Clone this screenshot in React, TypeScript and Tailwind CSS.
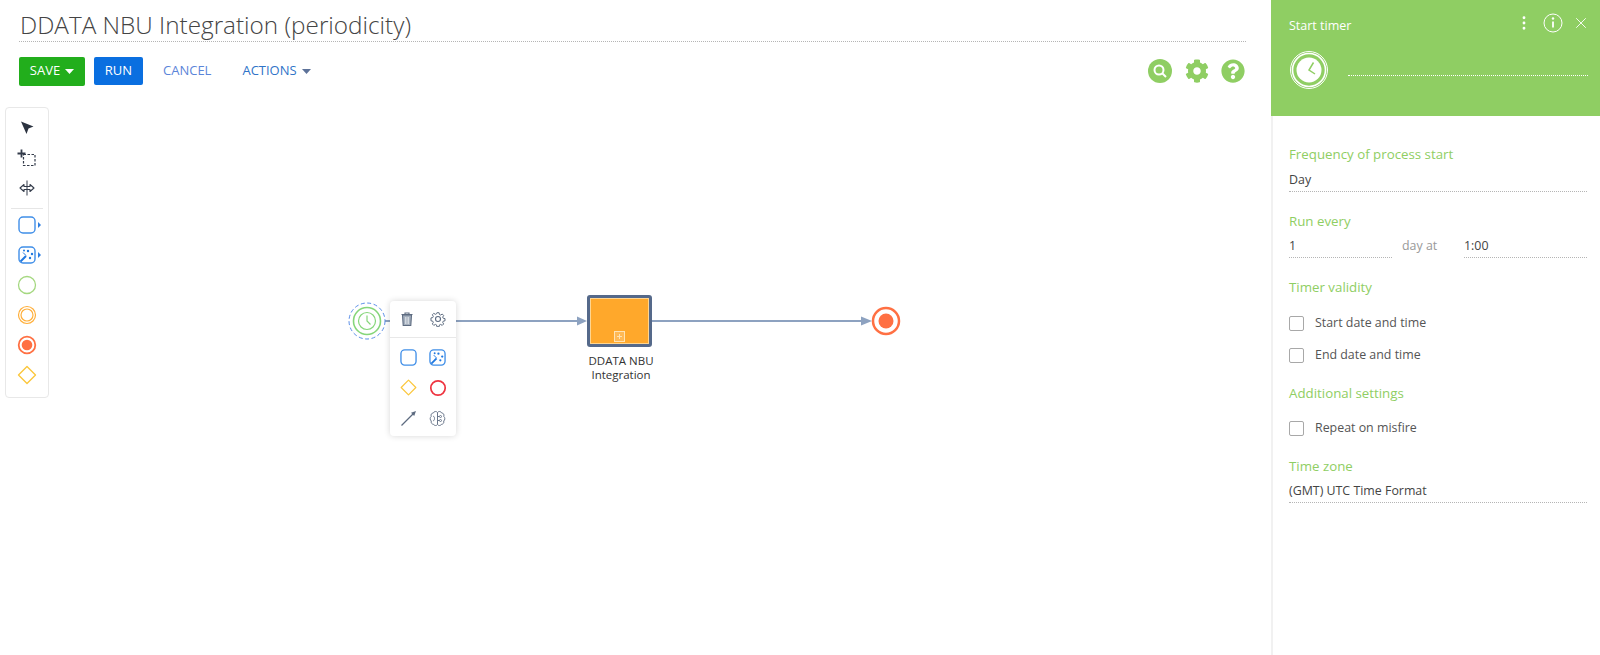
import React from "react";
import { X, EllipsisVertical } from "lucide-react";
import { FaCog, FaQuestionCircle } from "react-icons/fa";

const Caret = ({ color }: { color: string }) => (
  <svg width="9" height="5" viewBox="0 0 9 5" className="ml-[5px]"><path d="M0 0h9L4.500 5z" fill={color} /></svg>
);

const RoundedTask = ({ size = 18 }: { size?: number }) => (
  <svg width={size} height={size} viewBox="0 0 18 18" fill="none"><rect x="1" y="1" width="16" height="16" rx="4" stroke="#3f8ee8" strokeWidth="1.400" /></svg>
);

const ScriptTask = ({ size = 18 }: { size?: number }) => (
  <svg width={size} height={size} viewBox="0 0 18 18" fill="none">
    <rect x="1" y="1" width="16" height="16" rx="4" stroke="#3f8ee8" strokeWidth="1.400" />
    <path d="M2.500 15.500 8 10" stroke="#1f78e0" strokeWidth="2" />
    <path d="M5 6.500l3 3" stroke="#1f78e0" strokeWidth="1" />
    <circle cx="6" cy="4.500" r="1" fill="#1f78e0" />
    <circle cx="10" cy="5" r="1.200" fill="#1f78e0" />
    <circle cx="14" cy="8" r="1.200" fill="#1f78e0" />
    <circle cx="12" cy="12" r="1.200" fill="#1f78e0" />
  </svg>
);

const Diamond = ({ size = 22 }: { size?: number }) => (
  <svg width={size} height={size} viewBox="0 0 22 22" fill="none"><path d="M11 2.500 19.500 11 11 19.500 2.500 11z" stroke="#fbc73d" strokeWidth="1.400" strokeLinejoin="round" /></svg>
);

const ToolRow = ({ children, arrow }: { children: React.ReactNode; arrow?: boolean }) => (
  <div className="relative flex h-[30px] w-full shrink-0 items-center justify-center">
    {children}
    {arrow && <span className="absolute left-[32px] top-[12px] h-0 w-0 border-y-[3px] border-l-[3px] border-y-transparent border-l-[#2f7fe0]" />}
  </div>
);

const Toolbar = () => (
  <div className="absolute left-[5px] top-[7px] flex h-[291px] w-[44px] flex-col items-center rounded-[4px] border border-[#e8e8e8] bg-white pt-[5px]">
    <ToolRow>
      <svg width="16" height="16" viewBox="0 0 16 16"><path d="M2 1.500 14.500 6.500 9.500 8.500 7.500 14z" fill="#2c3340" /></svg>
    </ToolRow>
    <ToolRow>
      <svg width="20" height="18" viewBox="0 0 20 18" fill="none">
        <path d="M6.500 5.500h11.500v11H6.500z" stroke="#333b4a" strokeWidth="1.200" strokeDasharray="2.500 1.500" />
        <path d="M4.500 0.500v8M0.500 4.500h8" stroke="#333b4a" strokeWidth="1.800" />
      </svg>
    </ToolRow>
    <ToolRow>
      <svg width="16" height="16" viewBox="0 0 16 16" fill="none">
        <path d="M8 0.500v15" stroke="#333b4a" strokeWidth="1" />
        <path d="M5 4.500 1 8l4 3.500v-2h6v2l4-3.500-4-3.500v2H5z" stroke="#333b4a" strokeWidth="1.100" strokeLinejoin="round" />
      </svg>
    </ToolRow>
    <div className="mb-[1px] mt-[5px] h-px w-[32px] shrink-0 bg-[#e6e6e6]" />
    <ToolRow arrow><RoundedTask /></ToolRow>
    <ToolRow arrow><ScriptTask /></ToolRow>
    <ToolRow>
      <svg width="20" height="20" viewBox="0 0 20 20" fill="none"><circle cx="10" cy="10" r="8.500" stroke="#a5d880" strokeWidth="1.300" /></svg>
    </ToolRow>
    <ToolRow>
      <svg width="20" height="20" viewBox="0 0 20 20" fill="none"><circle cx="10" cy="10" r="8.500" stroke="#ffaf3a" strokeWidth="1.200" /><circle cx="10" cy="10" r="6" stroke="#ffaf3a" strokeWidth="1.200" /></svg>
    </ToolRow>
    <ToolRow>
      <svg width="20" height="20" viewBox="0 0 20 20" fill="none"><circle cx="10" cy="10" r="8.300" stroke="#ff7043" strokeWidth="1.800" /><circle cx="10" cy="10" r="5.300" fill="#ff7043" /></svg>
    </ToolRow>
    <ToolRow><Diamond /></ToolRow>
  </div>
);

const TrashIcon = () => (
  <svg width="14" height="16" viewBox="0 0 14 16" fill="none">
    <path d="M2.500 4h9l-.7 10.500H3.200z" fill="#a3aebc" stroke="#5d6b80" strokeWidth="1.100" />
    <path d="M1.500 3.500h11M5 3.500V2h4v1.500" stroke="#5d6b80" strokeWidth="1.100" />
    <path d="M5.500 6v7M7 6v7M8.500 6v7" stroke="#e6e9ee" strokeWidth="0.700" />
  </svg>
);

const GearIcon = () => (
  <svg width="16" height="16" viewBox="0 0 16 16" fill="none" stroke="#5d6b80" strokeWidth="1.100">
    <circle cx="8" cy="8" r="2.500" />
    <path d="M6.800 1h2.400l.4 2 1.300.6 1.800-1.100 1.600 1.600-1.100 1.800.6 1.300 2 .4v2.400l-2 .4-.6 1.300 1.100 1.800-1.600 1.600-1.800-1.100-1.300.6-.4 2H6.800l-.4-2-1.300-.6-1.800 1.100-1.600-1.600 1.100-1.800-.6-1.300-2-.4V6.800l2-.4.6-1.300-1.100-1.800 1.600-1.600 1.800 1.100 1.300-.6z" strokeLinejoin="round" transform="translate(0.800 0.800) scale(0.900)" />
  </svg>
);

const BrainIcon = () => (
  <svg width="17" height="17" viewBox="0 0 17 17" fill="none" stroke="#6a778b" strokeWidth="1">
    <path d="M8.500 2.500C7.500 1 5 1.200 4.500 2.800 2.500 3 1.500 4.800 2.300 6.300 0.800 7.500 0.800 10 2.300 11c-.6 1.800.6 3.300 2.200 3.300.7 1.500 3 1.700 4 .2 1 1.500 3.300 1.300 4-.2 1.600 0 2.800-1.500 2.200-3.300 1.500-1 1.500-3.500 0-4.700.8-1.500-.2-3.300-2.200-3.500C12 1.200 9.500 1 8.500 2.500z" />
    <path d="M8.500 2.500v12M8.500 6.500h1.800M8.500 10.500h1.800M4 6c1 .5 1.500 1 1.500 2.500S5 10.500 4 11" />
    <circle cx="11.500" cy="6.500" r="1" />
    <circle cx="11.500" cy="10.500" r="1" />
  </svg>
);

const MenuCell = ({ children }: { children: React.ReactNode }) => (
  <div className="flex h-[30.500px] items-center">{children}</div>
);

const ContextMenu = () => (
  <div className="absolute left-[390px] top-[201px] flex h-[135px] w-[66px] flex-col rounded-[4px] bg-white shadow-[0_0_6px_rgba(0,0,0,0.16)]">
    <div className="flex h-[37px] items-center justify-between border-b border-[#e8e8e8] px-[10px]">
      <TrashIcon />
      <GearIcon />
    </div>
    <div className="grid grid-cols-2 items-center justify-items-center px-[4px] pt-[4px]">
      <MenuCell><RoundedTask size={17} /></MenuCell>
      <MenuCell><ScriptTask size={17} /></MenuCell>
      <MenuCell><Diamond size={19} /></MenuCell>
      <MenuCell>
        <svg width="18" height="18" viewBox="0 0 18 18" fill="none"><circle cx="9" cy="9" r="7.200" stroke="#ee3440" strokeWidth="1.700" /></svg>
      </MenuCell>
      <MenuCell>
        <svg width="17" height="17" viewBox="0 0 17 17" fill="none"><path d="M1.500 15.500 13 4" stroke="#5d6b80" strokeWidth="1.200" /><path d="M16 1l-5 1.800 3.200 3.200z" fill="#5d6b80" /></svg>
      </MenuCell>
      <MenuCell><BrainIcon /></MenuCell>
    </div>
  </div>
);

const Diagram = () => (
  <>
    <svg className="absolute left-0 top-0" width="1000" height="300" fill="none">
      <path d="M385 221H578" stroke="#8da2c0" strokeWidth="2" />
      <path d="M577 216.500 587 221l-10 4.500z" fill="#8da2c0" />
      <path d="M652 221H862" stroke="#8da2c0" strokeWidth="2" />
      <path d="M861 216.500 872 221l-11 4.500z" fill="#8da2c0" />
      <circle cx="367" cy="221" r="18" stroke="#5b8fe8" strokeWidth="1" strokeDasharray="4 2.500" fill="#fff" />
      <circle cx="367" cy="221" r="13.500" stroke="#86d67a" strokeWidth="1.600" />
      <circle cx="367" cy="221" r="8.500" stroke="#86d67a" strokeWidth="1.200" />
      <path d="M367 215.500v5.500l3.500 3.500" stroke="#86d67a" strokeWidth="1.200" />
      <circle cx="886" cy="221" r="13" stroke="#ff7043" strokeWidth="2.500" fill="#fff" />
      <circle cx="886" cy="221" r="7.500" fill="#ff7043" />
    </svg>
    <div className="absolute left-[587px] top-[195px] flex h-[52px] w-[65px] items-end justify-center rounded-[3px] border-[3px] border-[#55698a] bg-[#ffa82b] shadow-[inset_0_0_0_1px_#ffd58f]">
      <span className="mb-[2px] mr-px flex h-[11px] w-[11px] items-center justify-center border border-[#ffe3b3] bg-white/20">
        <svg width="5" height="5" viewBox="0 0 5 5"><path d="M2.500 0v5M0 2.500h5" stroke="#ffe3b3" strokeWidth="1" /></svg>
      </span>
    </div>
    <div className="absolute left-[571px] top-[254px] w-[100px] text-center text-[11.500px] leading-[14px] text-[#333]">DDATA NBU<br />Integration</div>
    <ContextMenu />
  </>
);

const Main = () => (
  <div className="flex min-w-0 flex-1 flex-col">
    <div className="ml-[19px] mr-[25px] h-[42px] border-b border-dotted border-[#b5b5b5]">
      <h1 className="pl-px pt-[6px] text-[24.300px] font-light leading-[38px] text-[#444] whitespace-nowrap">DDATA NBU Integration (periodicity)</h1>
    </div>
    <div className="flex h-[58px] items-center pl-[19px] pr-[26px] text-[13px]">
      <button className="flex h-[29px] w-[66px] items-center justify-center rounded-[2px] bg-[#22ae1c] text-white">SAVE<Caret color="#fff" /></button>
      <button className="ml-[9px] flex h-[28px] w-[49px] items-center justify-center rounded-[2px] bg-[#0a6fe0] text-white">RUN</button>
      <button className="ml-[20px] text-[#5b85d9]">CANCEL</button>
      <button className="ml-[31px] flex items-center text-[#2f74c8]">ACTIONS<Caret color="#5d7299" /></button>
      <div className="ml-auto flex items-center gap-[12.500px]">
        <span className="flex h-[24px] w-[24px] items-center justify-center rounded-full bg-[#8fce63]">
          <svg width="16" height="16" viewBox="0 0 16 16" fill="none"><circle cx="7" cy="7" r="4.500" stroke="#fff" strokeWidth="2" /><path d="M10.500 10.500 14 14" stroke="#fff" strokeWidth="2" /></svg>
        </span>
        <FaCog size={24} color="#8fce63" />
        <FaQuestionCircle size={24} color="#8fce63" />
      </div>
    </div>
    <div className="relative flex-1"><Toolbar /><Diagram /></div>
  </div>
);

const Label = ({ children, className = "" }: { children: React.ReactNode; className?: string }) => (
  <div className={`text-[13.300px] leading-[18px] text-[#8fce63] ${className}`}>{children}</div>
);

const Value = ({ children, className = "" }: { children: React.ReactNode; className?: string }) => (
  <div className={`h-[22px] border-b border-dotted border-[#b5b5b5] pt-px text-[12.400px] leading-[18px] text-[#444] ${className}`}>{children}</div>
);

const Check = ({ label, className = "" }: { label: string; className?: string }) => (
  <div className={`flex h-[18px] items-center text-[12.400px] text-[#555] ${className}`}>
    <span className="mr-[11px] h-[15px] w-[15px] rounded-[2px] border-[1.500px] border-[#a8a8a8]" />
    {label}
  </div>
);

const Panel = () => (
  <div className="w-[329px] shrink-0 border-l-2 border-[#f1f1f1]">
    <div className="-ml-[2px] h-[116px] bg-[#8fce63] pl-[18px] pr-[10px] text-white">
      <div className="flex h-[50px] items-center">
        <span className="mt-[2px] text-[12.500px]">Start timer</span>
        <div className="ml-auto flex -translate-y-[2px] items-center">
          <EllipsisVertical size={18} strokeWidth={1.800} />
          <svg className="ml-[10px]" width="20" height="20" viewBox="0 0 20 20" fill="none"><circle cx="10" cy="10" r="9" stroke="#fff" strokeWidth="1" /><path d="M10 8.500v6" stroke="#fff" strokeWidth="1.800" /><circle cx="10" cy="5.500" r="1.200" fill="#fff" /></svg>
          <X className="ml-[9px]" size={18} strokeWidth={1.200} />
        </div>
      </div>
      <div className="flex items-start pr-[2px]">
        <svg width="40" height="40" viewBox="0 0 40 40" fill="none">
          <circle cx="20" cy="20" r="18.500" stroke="#fff" strokeWidth="1" />
          <circle cx="20" cy="20" r="16.500" stroke="#fff" strokeWidth="1.600" />
          <circle cx="20" cy="20" r="12.500" fill="#fff" />
          <path d="M24.500 12.500 20 20l6 4" stroke="#8fce63" strokeWidth="1.500" fill="none" />
        </svg>
        <div className="ml-[19px] mt-[25px] h-px flex-1 border-b border-dotted border-white" />
      </div>
    </div>
    <div className="pl-[16px] pr-[13px] pt-[29px]">
      <Label>Frequency of process start</Label>
      <Value className="mt-[7px]">Day</Value>
      <Label className="mt-[20px]">Run every</Label>
      <div className="mt-[6px] flex items-start">
        <Value className="w-[103px]">1</Value>
        <span className="ml-[10px] mt-px w-[62px] text-[12.400px] leading-[18px] text-[#999]">day at</span>
        <Value className="flex-1">1:00</Value>
      </div>
      <Label className="mt-[20px]">Timer validity</Label>
      <Check label="Start date and time" className="mt-[18px]" />
      <Check label="End date and time" className="mt-[14px]" />
      <Label className="mt-[20px]">Additional settings</Label>
      <Check label="Repeat on misfire" className="mt-[17px]" />
      <Label className="mt-[20px]">Time zone</Label>
      <Value className="mt-[6px]">(GMT) UTC Time Format</Value>
    </div>
  </div>
);

export default function App() {
  return (
    <div className="flex h-[655px] w-[1600px] overflow-hidden bg-white font-['Open_Sans',sans-serif]">
      <Main />
      <Panel />
    </div>
  );
}
